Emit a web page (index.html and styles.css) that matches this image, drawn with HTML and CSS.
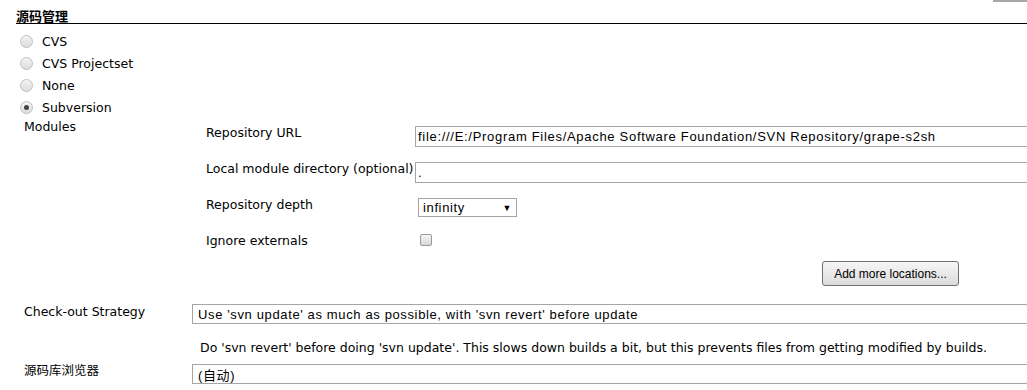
FILE: index.html
```html
<!DOCTYPE html>
<html>
<head>
    <title>源码管理</title>
    <link rel="stylesheet" href="styles.css">
</head>
<body>
    <div class="topbar"></div>
    <div class="section">
        <div class="section-header">源码管理</div>

        <div class="radio-list">
            <label class="radio-row"><span class="radio"></span>CVS</label>
            <label class="radio-row"><span class="radio"></span>CVS Projectset</label>
            <label class="radio-row"><span class="radio"></span>None</label>
            <label class="radio-row"><span class="radio checked"></span>Subversion</label>
        </div>

        <div class="modules">
            <div class="modules-label">Modules</div>
            <div class="module-grid">
                <div class="field-label">Repository URL</div>
                <div class="field"><input class="text-input" type="text" value="file:///E:/Program Files/Apache Software Foundation/SVN Repository/grape-s2sh"></div>

                <div class="field-label">Local module directory (optional)</div>
                <div class="field"><input class="text-input" type="text" value="."></div>

                <div class="field-label">Repository depth</div>
                <div class="field"><div class="select small">infinity<span class="arrow">▼</span></div></div>

                <div class="field-label">Ignore externals</div>
                <div class="field"><span class="checkbox"></span></div>
            </div>
            <div class="buttons">
                <button class="btn" type="button">Add more locations...</button>
            </div>
        </div>

        <div class="row">
            <div class="row-label">Check-out Strategy</div>
            <div class="row-field"><div class="select wide">Use 'svn update' as much as possible, with 'svn revert' before update</div></div>
        </div>
        <div class="description">Do 'svn revert' before doing 'svn update'. This slows down builds a bit, but this prevents files from getting modified by builds.</div>
        <div class="row browser-row">
            <div class="row-label">源码库浏览器</div>
            <div class="row-field"><div class="select wide">(自动)</div></div>
        </div>
    </div>
</body>
</html>
```

FILE: styles.css
```css
html { overflow: hidden; }
body { margin: 0; font-family: "DejaVu Sans", "Noto Sans CJK SC", sans-serif; font-size: 12.5px; color: #000; background: #fff; }
.topbar { position: absolute; top: 0; right: 0; width: 34px; height: 2px; background: #a8a8a8; }
.section { padding: 9px 0 0 16px; }
.section-header { font-weight: bold; font-family: "Noto Sans CJK SC", sans-serif; font-size: 13px; line-height: 14px; border-bottom: 1px solid #000; }

.radio-list { margin-top: 6px; }
.radio-row { display: flex; align-items: center; height: 22px; padding-left: 4px; }
.radio { width: 11px; height: 11px; border: 1px solid #c0c0c0; border-radius: 50%; background: linear-gradient(#f4f4f4, #dcdcdc); margin-right: 9px; position: relative; }
.radio.checked::after { content: ""; position: absolute; left: 3px; top: 3px; width: 5px; height: 5px; border-radius: 50%; background: #444; }

.modules { padding-left: 8px; }
.modules-label { line-height: 16px; margin-top: 1px; }
.module-grid { display: grid; grid-template-columns: 209px 1fr; grid-auto-rows: 36px; margin-left: 182px; margin-top: -9px; }
.field-label { line-height: 14px; white-space: nowrap; }
.text-input { width: 640px; height: 21px; box-sizing: border-box; border: 1px solid #a5a5a5; padding: 0 2px; font-family: "Liberation Sans", sans-serif; font-size: 13px; letter-spacing: 0.7px; color: #000; }
.select { display: flex; align-items: center; box-sizing: border-box; border: 1px solid #a5a5a5; font-family: "Liberation Sans", "Noto Sans CJK SC", sans-serif; font-size: 13px; letter-spacing: 0.63px; padding: 0 5px; white-space: nowrap; }
.select.small { width: 99px; height: 19px; margin: 0 0 0 3px; padding: 0 4px; }
.select .arrow { margin-left: auto; font-size: 9px; }
.select.wide { width: 860px; height: 20px; }
.checkbox { display: block; width: 10px; height: 10px; margin: 0 0 0 5px; border: 1px solid #9a9a9a; border-radius: 2px; background: linear-gradient(#f6f6f6, #d8d8d8); }

.buttons { display: flex; justify-content: flex-end; padding-right: 68px; margin-top: -9px; }
.btn { width: 137px; height: 25px; border: 1px solid #707070; border-radius: 3px; background: linear-gradient(#f6f6f6, #dcdcdc); font-family: "Liberation Sans", sans-serif; font-size: 12px; color: #000; padding: 0; }

.row { display: flex; margin-top: 18px; padding-left: 8px; }
.row-label { width: 168px; flex-shrink: 0; }
.description { padding-left: 184px; margin-top: 16px; }
.browser-row { margin-top: 9px; }
.browser-row .row-label { font-family: "Noto Sans CJK SC", sans-serif; line-height: 15px; margin-top: -2px; }
```
